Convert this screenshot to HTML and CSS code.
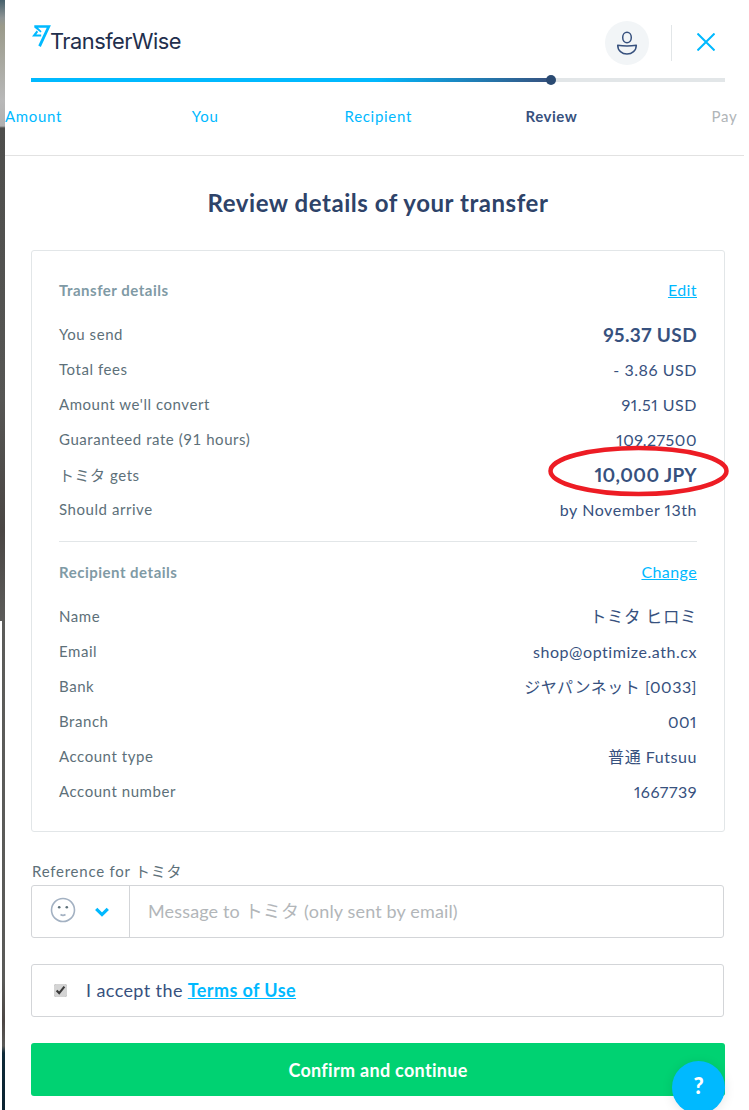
FILE: index.html
```html
<html>
<head>
    <meta http-equiv="Content-Type" content="text/html; charset=UTF-8" />
    <title>Review details of your transfer</title>
    <link rel="stylesheet" href="styles.css">
</head>
<body>
<div class="page">

    <!-- bit of the window behind the panel -->
    <div class="backdrop">
        <div class="backdropTop"></div>
        <div class="backdropLow"></div>
    </div>

    <div class="panel">
        <div class="header">
            <div class="topRow">
                <div class="logo">
                    <svg class="logoFlag" width="21" height="24" viewBox="0 0 21 24">
                        <path d="M2.3 0.3H18.9L8.8 22L6.3 20.4L14.7 2.8H6L9.6 6.2L8.6 7.6L2.3 2.6Z" fill="#00b9ff"/>
                        <path d="M4.6 5.6L0 11.6H9.2V9.5H4.3L6.1 7Z" fill="#00b9ff"/>
                    </svg>
                    <span class="logoText">TransferWise</span>
                </div>
                <div class="avatar">
                    <svg width="22" height="24" viewBox="0 0 22 24" fill="none" stroke="#37517e" stroke-width="1.5" stroke-linejoin="round">
                        <ellipse cx="11" cy="6.5" rx="4.3" ry="5.2"/>
                        <path d="M1.7 14.2Q11 15.6 20.3 14.2C20.3 19.6 16 23 11 23C6 23 1.7 19.6 1.7 14.2Z"/>
                    </svg>
                </div>
                <div class="headDivider"></div>
                <svg class="closeIcon" width="18" height="18" viewBox="0 0 18 18" fill="none" stroke="#00b9ff" stroke-width="2">
                    <path d="M0.5 0.5L17.5 17.5M17.5 0.5L0.5 17.5"/>
                </svg>
            </div>

            <div class="progress">
                <div class="progressFill"><span class="progressDot"></span></div>
            </div>

            <div class="steps">
                <div class="step done"><span>Amount</span></div>
                <div class="step done"><span>You</span></div>
                <div class="step done"><span>Recipient</span></div>
                <div class="step active"><span>Review</span></div>
                <div class="step todo"><span>Pay</span></div>
            </div>
        </div>

        <div class="content">
            <h1>Review details of your transfer</h1>

            <div class="card">
                <div class="sectionHead">
                    <span class="sectionTitle">Transfer details</span>
                    <a href="#" class="sectionLink">Edit</a>
                </div>
                <div class="rows">
                    <div class="row"><span>You send</span><b class="big">95.37 USD</b></div>
                    <div class="row"><span>Total fees</span><b>- 3.86 USD</b></div>
                    <div class="row"><span>Amount we'll convert</span><b>91.51 USD</b></div>
                    <div class="row"><span>Guaranteed rate (91 hours)</span><b>109.27500</b></div>
                    <div class="row"><span>トミタ gets</span><b class="big">10,000 JPY</b></div>
                    <div class="row"><span>Should arrive</span><b>by November 13th</b></div>
                </div>
                <svg class="redCircle" width="183" height="52" viewBox="0 0 183 52" fill="none">
                    <ellipse cx="91.5" cy="26" rx="88" ry="23" stroke="#ed1c24" stroke-width="4.5"/>
                </svg>

                <div class="cardDivider"></div>

                <div class="sectionHead">
                    <span class="sectionTitle">Recipient details</span>
                    <a href="#" class="sectionLink">Change</a>
                </div>
                <div class="rows">
                    <div class="row"><span>Name</span><b class="jp">トミタ ヒロミ</b></div>
                    <div class="row"><span>Email</span><b>shop@optimize.ath.cx</b></div>
                    <div class="row"><span>Bank</span><b>ジヤパンネット [0033]</b></div>
                    <div class="row"><span>Branch</span><b>001</b></div>
                    <div class="row"><span>Account type</span><b>普通 Futsuu</b></div>
                    <div class="row"><span>Account number</span><b>1667739</b></div>
                </div>
            </div>

            <label class="refLabel">Reference for トミタ</label>
            <div class="refBox">
                <div class="emojiPick">
                    <svg width="26" height="26" viewBox="0 0 26 26" fill="none" stroke="#a3b1c2" stroke-width="1.6">
                        <circle cx="13" cy="13" r="11.5"/>
                        <circle cx="9.2" cy="10.2" r="1.3" fill="#5d7079" stroke="none"/>
                        <circle cx="16.8" cy="10.2" r="1.3" fill="#5d7079" stroke="none"/>
                        <path d="M10.5 17.5C12 18.5 14 18.5 15.5 17.5"/>
                    </svg>
                    <svg class="chevron" width="14" height="10" viewBox="0 0 14 10" fill="none" stroke="#00b9ff" stroke-width="3.2">
                        <path d="M1.2 1.8L7 7.6L12.8 1.8"/>
                    </svg>
                </div>
                <div class="refPlaceholder">Message to トミタ (only sent by email)</div>
            </div>

            <div class="termsBox">
                <input type="checkbox" checked class="termsCheck">
                <span class="termsText">I accept the <a href="#">Terms of Use</a></span>
            </div>

            <button class="confirmBtn">Confirm and continue</button>
        </div>
    </div>

    <div class="helpBtn">?</div>
</div>
</body>
</html>
```

FILE: styles.css
```css
html, body {
    margin: 0;
    padding: 0;
    height: 100%;
    background: #fff;
    overflow: hidden;
}

body {
    font-family: Lato, "Noto Sans CJK JP", sans-serif;
    font-size: 15px;
    color: #5d7079;
}

a {
    color: #00b9ff;
}

.page {
    position: relative;
    display: flex;
    width: 749px;
    height: 1110px;
    overflow: hidden;
}

.backdrop {
    flex: none;
    width: 5px;
}

.backdropTop {
    height: 621px;
    background: linear-gradient(#47606b 0, #8e9494 18px, #9a9a8a 26px, #b8b8b8 100px, #b0b0b0 126px, #4e4e4c 128px, #565654 400px, #4a4644 530px, #5c5c5a 621px);
}

.backdropLow {
    height: 489px;
    margin-left: 2px;
    background: linear-gradient(#5c5c5a 0, #5a5a58 360px, #4c4644 400px, #5a5a58 425px, #0e2a38 432px, #0a2230 489px);
}

.panel {
    flex: none;
    width: 739px;
    overflow: hidden;
}

/* header */
.header {
    height: 155px;
    border-bottom: 1px solid #e2e2e2;
}

.topRow {
    display: flex;
    align-items: center;
    height: 44px;
    padding: 21px 29px 0 26px;
}

.logo {
    display: flex;
    align-items: flex-end;
    margin-right: auto;
    margin-left: 1px;
    height: 30px;
    margin-top: -9px;
}

.logoFlag {
    flex: none;
    margin-bottom: 5px;
    margin-right: -3px;
}

.logoText {
    font-family: Inter, sans-serif;
    font-size: 21.8px;
    line-height: 26px;
    color: #1f2f4d;
    letter-spacing: -0.5px;
}

.avatar {
    display: flex;
    align-items: center;
    justify-content: center;
    width: 44px;
    height: 44px;
    border-radius: 50%;
    background: #f2f5f7;
}

.headDivider {
    width: 1px;
    height: 36px;
    margin: 0 25px 0 22px;
    background: #e2e6e8;
}

.closeIcon {
    margin-top: -2px;
}

.progress {
    height: 4px;
    margin: 13px 19px 0 26px;
    background: #e2e6e8;
}

.progressFill {
    position: relative;
    width: 520px;
    height: 4px;
    background: linear-gradient(90deg, #00b9ff 0, #00b9ff 66%, #37517e 100%);
}

.progressDot {
    position: absolute;
    right: -5px;
    top: -3px;
    width: 10px;
    height: 10px;
    border-radius: 50%;
    background: #2a4a72;
}

.steps {
    display: flex;
    justify-content: space-between;
    margin-top: 24px;
    padding: 0 19.5px 0 27px;
}

.step {
    display: flex;
    justify-content: center;
    width: 0;
    line-height: 20px;
    font-size: 15px;
    white-space: nowrap;
    letter-spacing: 0.7px;
}

.step:first-child span {
    margin-left: 3px;
}

.step.done {
    color: #00b9ff;
}

.step.active {
    color: #37517e;
    font-weight: 700;
    letter-spacing: 0.5px;
}

.step.todo {
    color: #b0b5b8;
}

/* content */
.content {
    padding: 0 19px 0 26px;
}

h1 {
    margin: 31px 0;
    font-size: 24px;
    line-height: 32px;
    font-weight: 700;
    text-align: center;
    color: #2e4369;
    letter-spacing: 0.55px;
}

.card {
    position: relative;
    padding: 28px 27px 21px;
    border: 1px solid #e2e6e8;
    border-radius: 3px;
}

.sectionHead {
    display: flex;
    justify-content: space-between;
    align-items: center;
    box-sizing: border-box;
    height: 24px;
    padding-bottom: 2px;
    margin-bottom: 15px;
}

.sectionTitle {
    font-weight: 700;
    color: #7f9aa5;
    letter-spacing: 0.5px;
}

.sectionLink {
    margin-bottom: 2px;
    font-size: 16px;
    letter-spacing: 0.4px;
}

.row {
    display: flex;
    justify-content: space-between;
    align-items: center;
    box-sizing: border-box;
    height: 35px;
    padding-bottom: 3px;
    letter-spacing: 0.55px;
}

.row b {
    font-size: 16px;
    font-weight: 400;
    color: #37517e;
    letter-spacing: 0.55px;
    font-variant-numeric: proportional-nums;
}

.row b.big {
    font-size: 19px;
    font-weight: 700;
    letter-spacing: 0.4px;
}

.row b.jp {
    font-size: 16.5px;
}

.cardDivider {
    height: 1px;
    margin: 13px 0 19px;
    background: #e2e6e8;
}

.redCircle {
    position: absolute;
    right: -6px;
    top: 194px;
}

/* reference and terms */
.refLabel {
    display: block;
    margin-top: 29px;
    padding-bottom: 1px;
    padding-left: 1px;
    line-height: 20px;
    letter-spacing: 0.75px;
}

.refBox, .termsBox {
    display: flex;
    align-items: center;
    box-sizing: border-box;
    width: 693px;
    height: 53px;
    border: 1px solid #d3d5d8;
    border-radius: 3px;
}

.refBox {
    margin-top: 3px;
}

.emojiPick {
    display: flex;
    align-items: center;
    box-sizing: border-box;
    flex: none;
    width: 98px;
    height: 100%;
    padding-left: 18px;
    padding-bottom: 4px;
    border-right: 1px solid #d3d5d8;
}

.chevron {
    margin: 4px 0 0 19px;
}

.refPlaceholder {
    padding-left: 18px;
    padding-bottom: 3px;
    font-size: 18px;
    letter-spacing: 0.15px;
    color: #b2b6b9;
}

.termsBox {
    margin-top: 26px;
    font-size: 18px;
    color: #37517e;
}

.termsCheck {
    margin: 0 19px 0 22px;
    accent-color: #d4d4d4;
}

.termsText {
    padding-bottom: 2px;
    letter-spacing: 0.4px;
}

.termsBox a {
    font-weight: 700;
}

.confirmBtn {
    display: block;
    width: 694px;
    height: 53px;
    margin-top: 26px;
    border: 0;
    border-radius: 3px;
    background: #00d272;
    color: #fff;
    font-family: Lato, sans-serif;
    font-size: 18px;
    font-weight: 700;
    letter-spacing: 0.3px;
}

.helpBtn {
    position: absolute;
    left: 672px;
    top: 1061px;
    width: 53px;
    height: 53px;
    border-radius: 50%;
    background: #00b9ff;
    color: #fff;
    font-size: 22px;
    font-weight: 900;
    line-height: 50px;
    text-align: center;
    box-shadow: 0 2px 12px rgba(0, 0, 0, 0.1);
}
```
